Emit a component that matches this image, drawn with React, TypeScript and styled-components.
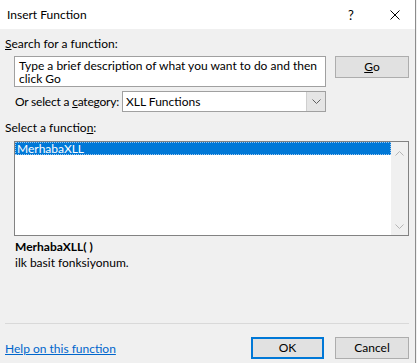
import React from "react";
import styled, { createGlobalStyle } from "styled-components";

const GlobalStyle = createGlobalStyle`
  html, body {
    margin: 0;
    padding: 0;
    background: #f0f0f0;
  }
  body {
    font-family: Lato, "Noto Sans", sans-serif;
    font-size: 12px;
    color: #000;
  }
`;

const Dialog = styled.div`
  width: 416px;
  height: 363px;
  box-sizing: border-box;
  border-right: 1px solid #8c8c8c;
  background: #f0f0f0;
  display: flex;
  flex-direction: column;
  overflow: hidden;
`;

const TitleBar = styled.div`
  height: 29px;
  flex-shrink: 0;
  background: #fff;
  display: flex;
  align-items: center;
  padding-left: 7px;
`;

const Title = styled.div`
  flex: 1;
  line-height: 16px;
`;

const TitleButton = styled.div<{ $w: number }>`
  width: ${(p) => p.$w}px;
  height: 29px;
  display: flex;
  align-items: center;
  justify-content: center;
  font-size: 13px;
`;

const Body = styled.div`
  flex: 1;
  display: flex;
  flex-direction: column;
  padding: 7px 6px 4px 5px;
`;

const Label = styled.div<{ $gap?: number }>`
  line-height: 16px;
  height: 16px;
  margin-top: ${(p) => p.$gap ?? 0}px;
  white-space: nowrap;
`;

const SearchRow = styled.div`
  display: flex;
  align-items: flex-start;
  gap: 9px;
  margin-top: 4px;
  padding-left: 9px;
`;

const SearchBox = styled.div`
  width: 312px;
  height: 31px;
  box-sizing: border-box;
  background: #fff;
  border: 1px solid #a0a0a0;
  padding: 2px 4px 0 4px;
  line-height: 13px;
`;

const Button = styled.div<{ $default?: boolean }>`
  width: ${(p) => (p.$default ? 73 : 74)}px;
  height: 22px;
  box-sizing: border-box;
  background: #e1e1e1;
  border: ${(p) => (p.$default ? "2px solid #0078d7" : "1px solid #adadad")};
  display: flex;
  align-items: center;
  justify-content: center;
  line-height: 16px;
`;

const CategoryRow = styled.div`
  display: flex;
  align-items: center;
  margin-top: 4px;
  height: 21px;
  padding-left: 10px;
`;

const CategoryLabel = styled.div`
  width: 107px;
  white-space: nowrap;
  letter-spacing: -0.2px;
`;

const Select = styled.div`
  width: 204px;
  height: 21px;
  box-sizing: border-box;
  background: #fff;
  border: 1px solid #a0a0a0;
  display: flex;
  align-items: stretch;
`;

const SelectValue = styled.div`
  flex: 1;
  padding-left: 3px;
  line-height: 19px;
`;

const DropButton = styled.div`
  width: 18px;
  background: #e5e5e5;
  border-left: 1px solid #cfcfcf;
  display: flex;
  align-items: center;
  justify-content: center;
`;

const ListBox = styled.div`
  margin: 5px 0 0 9px;
  width: 395px;
  height: 95px;
  box-sizing: border-box;
  border: 1px solid #828282;
  background: #fff;
  display: flex;
`;

const Items = styled.div`
  flex: 1;
`;

const Item = styled.div<{ $selected?: boolean }>`
  height: 13px;
  line-height: 13px;
  padding-left: 2px;
  box-sizing: border-box;
  color: ${(p) => (p.$selected ? "#fff" : "#000")};
  background: ${(p) => (p.$selected ? "#0078d7" : "transparent")};
  outline: ${(p) => (p.$selected ? "1px dotted #9cc7ee" : "none")};
  outline-offset: -1px;
`;

const ScrollBar = styled.div`
  width: 17px;
  background: #f0f0f0;
  display: flex;
  flex-direction: column;
  justify-content: space-between;
  align-items: center;
  padding: 9px 0 6px;
`;

const Description = styled.div`
  margin-top: 3px;
  padding-left: 10px;
  line-height: 16px;
`;

const FuncName = styled.div`
  font-weight: bold;
`;

const Footer = styled.div`
  margin-top: auto;
`;

const Separator = styled.div`
  height: 1px;
  background: #d9d9d9;
`;

const FooterRow = styled.div`
  margin-top: 13px;
  display: flex;
  align-items: center;
  gap: 11px;
`;

const HelpLink = styled.a`
  flex: 1;
  color: #0066cc;
  text-decoration: underline;
  cursor: pointer;
`;

const Chevron = ({ up, color }: { up?: boolean; color: string }) => (
  <svg width="9" height="5" viewBox="0 0 9 5">
    <polyline
      points={up ? "0.5,4.5 4.5,0.5 8.5,4.5" : "0.5,0.5 4.5,4.5 8.5,0.5"}
      fill="none"
      stroke={color}
      strokeWidth="1"
    />
  </svg>
);

export default function App() {
  return (
    <>
      <GlobalStyle />
      <Dialog>
        <TitleBar>
          <Title>Insert Function</Title>
          <TitleButton $w={46}>?</TitleButton>
          <TitleButton $w={41}>
            <svg width="10" height="10" viewBox="0 0 10 10">
              <path d="M0.5 0.5 L9.5 9.5 M9.5 0.5 L0.5 9.5" stroke="#000" strokeWidth="1" />
            </svg>
          </TitleButton>
        </TitleBar>
        <Body>
          <Label>
            <u>S</u>earch for a function:
          </Label>
          <SearchRow>
            <SearchBox>
              Type a brief description of what you want to do and then click Go
            </SearchBox>
            <Button>
              <u>G</u>o
            </Button>
          </SearchRow>
          <CategoryRow>
            <CategoryLabel>
              Or select a <u>c</u>ategory:
            </CategoryLabel>
            <Select>
              <SelectValue>XLL Functions</SelectValue>
              <DropButton>
                <Chevron color="#606060" />
              </DropButton>
            </Select>
          </CategoryRow>
          <Label $gap={8}>
            Select a functio<u>n</u>:
          </Label>
          <ListBox>
            <Items>
              <Item $selected>MerhabaXLL</Item>
            </Items>
            <ScrollBar>
              <Chevron up color="#b5b5b5" />
              <Chevron color="#b5b5b5" />
            </ScrollBar>
          </ListBox>
          <Description>
            <FuncName>MerhabaXLL( )</FuncName>
            <div>ilk basit fonksiyonum.</div>
          </Description>
          <Footer>
            <Separator />
            <FooterRow>
              <HelpLink>Help on this function</HelpLink>
              <Button $default>OK</Button>
              <Button>Cancel</Button>
            </FooterRow>
          </Footer>
        </Body>
      </Dialog>
    </>
  );
}
